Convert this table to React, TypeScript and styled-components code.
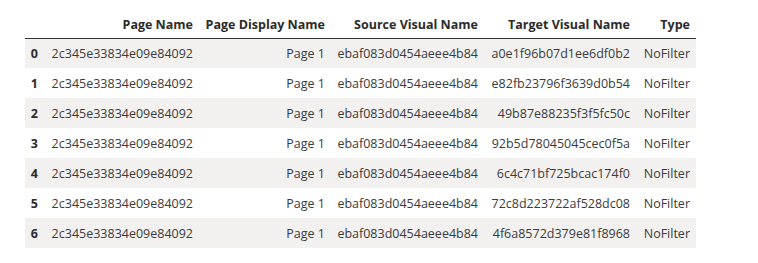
import React from "react";
import styled, { createGlobalStyle } from "styled-components";

const GlobalStyle = createGlobalStyle`
  body {
    margin: 0;
    background: #ffffff;
    font-family: "Open Sans", "Noto Sans", sans-serif;
  }
`;

const Output = styled.div`
  padding: 8px 0 0 25px;
`;

const Table = styled.table`
  border-collapse: collapse;
  border-spacing: 0;
  table-layout: fixed;
  font-size: 12.5px;
  color: #3b3b3b;
`;

const HeadCell = styled.th<{ $w: number }>`
  width: ${(p) => p.$w}px;
  height: 30px;
  padding: 0 6px 5px 0;
  box-sizing: border-box;
  text-align: right;
  font-weight: 700;
  color: #2b2b2b;
  white-space: nowrap;
  border-bottom: 1px solid #333333;
  vertical-align: bottom;
`;

const Row = styled.tr<{ $striped: boolean }>`
  background: ${(p) => (p.$striped ? "#f2f1f0" : "#ffffff")};
`;

const IndexCell = styled.th`
  height: 30px;
  padding: 1px 6px 0 0;
  box-sizing: border-box;
  text-align: right;
  font-weight: 700;
  color: #2b2b2b;
  vertical-align: middle;
`;

const Cell = styled.td`
  height: 30px;
  padding: 1px 6px 0 0;
  box-sizing: border-box;
  text-align: right;
  white-space: nowrap;
  vertical-align: middle;
`;

const columns = [
  { label: "", width: 19 },
  { label: "Page Name", width: 155 },
  { label: "Page Display Name", width: 132 },
  { label: "Source Visual Name", width: 153 },
  { label: "Target Visual Name", width: 152 },
  { label: "Type", width: 60 },
];

const targets = [
  "a0e1f96b07d1ee6df0b2",
  "e82fb23796f3639d0b54",
  "49b87e88235f3f5fc50c",
  "92b5d78045045cec0f5a",
  "6c4c71bf725bcac174f0",
  "72c8d223722af528dc08",
  "4f6a8572d379e81f8968",
];

export default function App() {
  return (
    <>
      <GlobalStyle />
      <Output>
        <Table>
          <thead>
            <tr>
              {columns.map((c, i) => (
                <HeadCell key={i} $w={c.width}>
                  {c.label}
                </HeadCell>
              ))}
            </tr>
          </thead>
          <tbody>
            {targets.map((t, i) => (
              <Row key={i} $striped={i % 2 === 0}>
                <IndexCell>{i}</IndexCell>
                <Cell>2c345e33834e09e84092</Cell>
                <Cell>Page 1</Cell>
                <Cell>ebaf083d0454aeee4b84</Cell>
                <Cell>{t}</Cell>
                <Cell>NoFilter</Cell>
              </Row>
            ))}
          </tbody>
        </Table>
      </Output>
    </>
  );
}
